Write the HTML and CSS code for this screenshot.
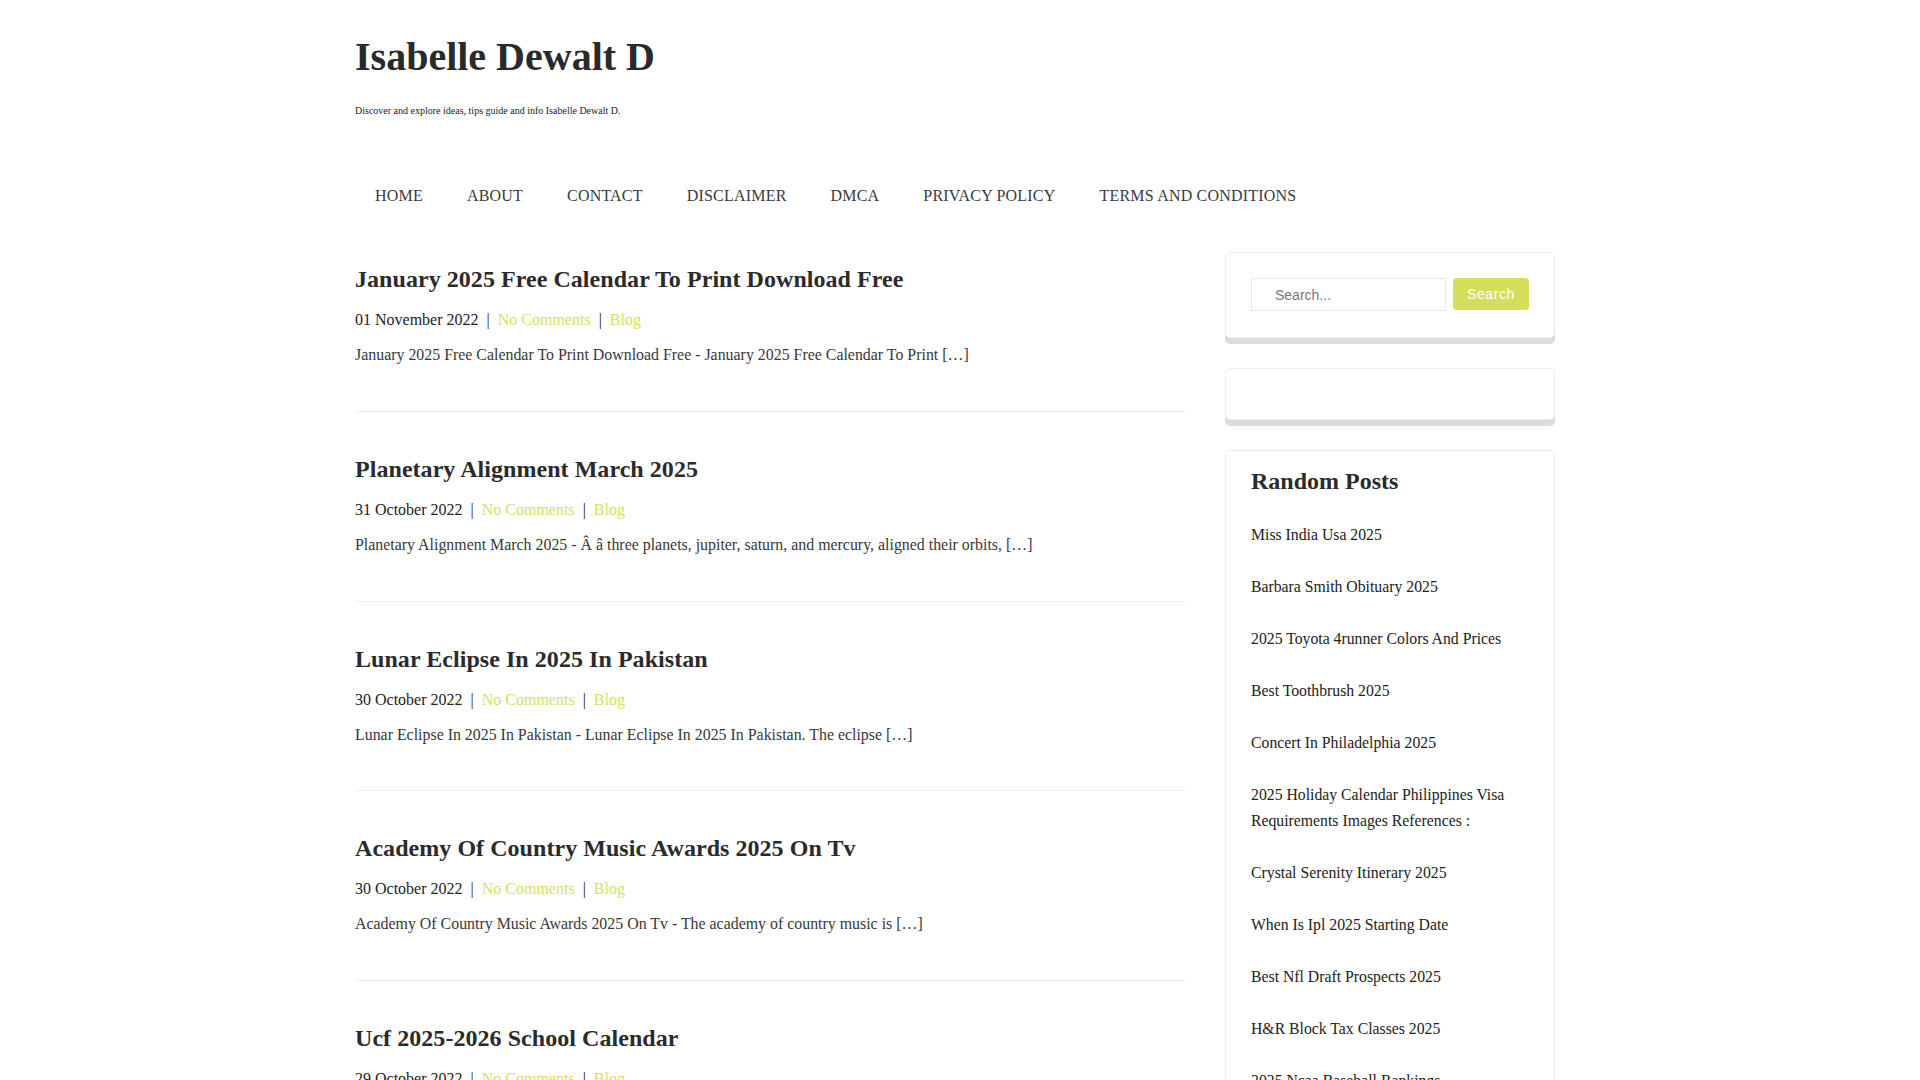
FILE: index.html
```html
<!DOCTYPE html>
<html lang="en">
<head>
<meta charset="utf-8">
<title>Isabelle Dewalt D</title>
<link rel="stylesheet" href="styles.css">
</head>
<body>
<div class="container">
  <header class="site-header">
    <h1 class="site-title">Isabelle Dewalt D</h1>
    <p class="site-desc">Discover and explore ideas, tips guide and info Isabelle Dewalt D.</p>
    <nav class="main-nav">
      <a href="#">HOME</a>
      <a href="#">ABOUT</a>
      <a href="#">CONTACT</a>
      <a href="#">DISCLAIMER</a>
      <a href="#">DMCA</a>
      <a href="#">PRIVACY POLICY</a>
      <a href="#">TERMS AND CONDITIONS</a>
    </nav>
  </header>

  <div class="layout">
    <main class="posts">
      <article class="post">
        <h2 class="post-title">January 2025 Free Calendar To Print Download Free</h2>
        <p class="post-meta">01 November 2022<span class="sep">|</span><a href="#">No Comments</a><span class="sep">|</span><a href="#">Blog</a></p>
        <p class="post-excerpt">January 2025 Free Calendar To Print Download Free - January 2025 Free Calendar To Print […]</p>
      </article>
      <article class="post">
        <h2 class="post-title">Planetary Alignment March 2025</h2>
        <p class="post-meta">31 October 2022<span class="sep">|</span><a href="#">No Comments</a><span class="sep">|</span><a href="#">Blog</a></p>
        <p class="post-excerpt">Planetary Alignment March 2025 - Â â three planets, jupiter, saturn, and mercury, aligned their orbits, […]</p>
      </article>
      <article class="post">
        <h2 class="post-title">Lunar Eclipse In 2025 In Pakistan</h2>
        <p class="post-meta">30 October 2022<span class="sep">|</span><a href="#">No Comments</a><span class="sep">|</span><a href="#">Blog</a></p>
        <p class="post-excerpt">Lunar Eclipse In 2025 In Pakistan - Lunar Eclipse In 2025 In Pakistan. The eclipse […]</p>
      </article>
      <article class="post">
        <h2 class="post-title">Academy Of Country Music Awards 2025 On Tv</h2>
        <p class="post-meta">30 October 2022<span class="sep">|</span><a href="#">No Comments</a><span class="sep">|</span><a href="#">Blog</a></p>
        <p class="post-excerpt">Academy Of Country Music Awards 2025 On Tv - The academy of country music is […]</p>
      </article>
      <article class="post">
        <h2 class="post-title">Ucf 2025-2026 School Calendar</h2>
        <p class="post-meta">29 October 2022<span class="sep">|</span><a href="#">No Comments</a><span class="sep">|</span><a href="#">Blog</a></p>
        <p class="post-excerpt">Ucf 2025-2026 School Calendar - Ucf 2025-2026 School Calendar. The academic calendar […]</p>
      </article>
      <article class="post">
        <h2 class="post-title">Best Nfl Draft Prospects 2025</h2>
        <p class="post-meta">29 October 2022<span class="sep">|</span><a href="#">No Comments</a><span class="sep">|</span><a href="#">Blog</a></p>
        <p class="post-excerpt">Best Nfl Draft Prospects 2025 - The best prospects for the next draft class […]</p>
      </article>
      <article class="post">
        <h2 class="post-title">Crystal Serenity Itinerary 2025</h2>
        <p class="post-meta">28 October 2022<span class="sep">|</span><a href="#">No Comments</a><span class="sep">|</span><a href="#">Blog</a></p>
        <p class="post-excerpt">Crystal Serenity Itinerary 2025 - Crystal Serenity Itinerary 2025. The cruise […]</p>
      </article>
      <article class="post">
        <h2 class="post-title">Concert In Philadelphia 2025</h2>
        <p class="post-meta">28 October 2022<span class="sep">|</span><a href="#">No Comments</a><span class="sep">|</span><a href="#">Blog</a></p>
        <p class="post-excerpt">Concert In Philadelphia 2025 - Concert In Philadelphia 2025. The concert […]</p>
      </article>
    </main>

    <aside class="sidebar">
      <div class="widget widget-search">
        <form class="search-form">
          <input class="search-input" type="text" placeholder="Search...">
          <button class="search-btn" type="button">Search</button>
        </form>
      </div>
      <div class="widget widget-empty"></div>
      <div class="widget widget-random">
        <h3 class="widget-title">Random Posts</h3>
        <ul class="random-list">
          <li><a href="#">Miss India Usa 2025</a></li>
          <li><a href="#">Barbara Smith Obituary 2025</a></li>
          <li><a href="#">2025 Toyota 4runner Colors And Prices</a></li>
          <li><a href="#">Best Toothbrush 2025</a></li>
          <li><a href="#">Concert In Philadelphia 2025</a></li>
          <li><a href="#">2025 Holiday Calendar Philippines Visa Requirements Images References :</a></li>
          <li><a href="#">Crystal Serenity Itinerary 2025</a></li>
          <li><a href="#">When Is Ipl 2025 Starting Date</a></li>
          <li><a href="#">Best Nfl Draft Prospects 2025</a></li>
          <li><a href="#">H&amp;R Block Tax Classes 2025</a></li>
          <li><a href="#">2025 Ncaa Baseball Rankings</a></li>
          <li><a href="#">Lunar Eclipse In 2025 In Pakistan</a></li>
          <li><a href="#">Planetary Alignment March 2025</a></li>
        </ul>
      </div>
    </aside>
  </div>
</div>
</body>
</html>
```

FILE: styles.css
```css
html, body {
  margin: 0;
  padding: 0;
  background: #ffffff;
}

body {
  /* room for the reference page's vertical scrollbar */
  padding-right: 10px;
  font-family: "Liberation Serif", "Times New Roman", serif;
  font-size: 16px;
  color: #222222;
}

a {
  text-decoration: none;
}

.container {
  width: 1200px;
  margin: 0 auto;
}

/* Header */
.site-header {
  padding-top: 33px;
}

.site-title {
  margin: 0;
  font-size: 40px;
  line-height: 48px;
  font-weight: bold;
  color: #2a2a2a;
}

.site-desc {
  margin: 22px 0 0;
  font-size: 10px;
  line-height: 15px;
  color: #222222;
}

.main-nav {
  display: flex;
  margin-top: 58px;
  height: 40px;
  align-items: center;
}

.main-nav a {
  padding: 0 22px;
  font-size: 16px;
  line-height: 40px;
  letter-spacing: 0.2px;
  color: #3a3a3a;
}

.main-nav a:first-child {
  padding-left: 20px;
}

/* Layout */
.layout {
  display: grid;
  grid-template-columns: 830px 330px;
  column-gap: 40px;
  margin-top: 36px;
  align-items: start;
}

/* Posts */
.posts {
  padding-top: 13px;
}

.post {
  padding-bottom: 43.8px;
  margin-bottom: 43px;
  border-bottom: 1px solid #ececf0;
}

.post-title {
  margin: 0;
  font-size: 24px;
  line-height: 29px;
  font-weight: bold;
  letter-spacing: 0.05px;
  color: #2b2b2b;
}

.post-meta {
  margin: 14px 0 0;
  line-height: 24px;
  color: #222222;
}

.post-meta a {
  color: #d5df62;
}

.sep {
  padding: 0 8px;
  color: #222222;
}

.post-excerpt {
  margin: 11px 0 0;
  font-size: 15.9px;
  line-height: 24px;
  color: #383838;
}

/* Sidebar */
.widget {
  background: #ffffff;
  border: 1px solid #ededed;
  border-radius: 5px;
  box-shadow: 0 6px 0 #dcdcdc;
  padding: 25px;
  margin-bottom: 30px;
}

.widget-search {
  padding-bottom: 26px;
}

.search-form {
  display: flex;
  align-items: center;
  gap: 7px;
}

.search-input {
  box-sizing: border-box;
  width: 195px;
  height: 33px;
  border: 1px solid #e8e8e8;
  border-radius: 0;
  padding: 0 0 0 23px;
  font-family: "Liberation Sans", Arial, sans-serif;
  font-size: 14px;
  color: #555555;
  outline: none;
}

.search-input::placeholder {
  color: #777777;
}

.search-btn {
  box-sizing: border-box;
  width: 76px;
  height: 32px;
  border: none;
  border-radius: 4px;
  background: #d4de5a;
  color: #ffffff;
  font-family: "Liberation Sans", Arial, sans-serif;
  font-size: 14px;
  letter-spacing: 0.6px;
  padding: 0;
  margin-top: -1px;
}

.widget-random {
  padding-top: 16px;
}

.widget-title {
  margin: 0 0 13px;
  font-size: 24px;
  line-height: 29px;
  font-weight: bold;
  color: #2b2b2b;
}

.random-list {
  list-style: none;
  margin: 0;
  padding: 0;
}

.random-list li {
  padding: 13px 0;
  font-size: 15.75px;
  line-height: 26px;
}

.random-list a {
  color: #222222;
}
```
